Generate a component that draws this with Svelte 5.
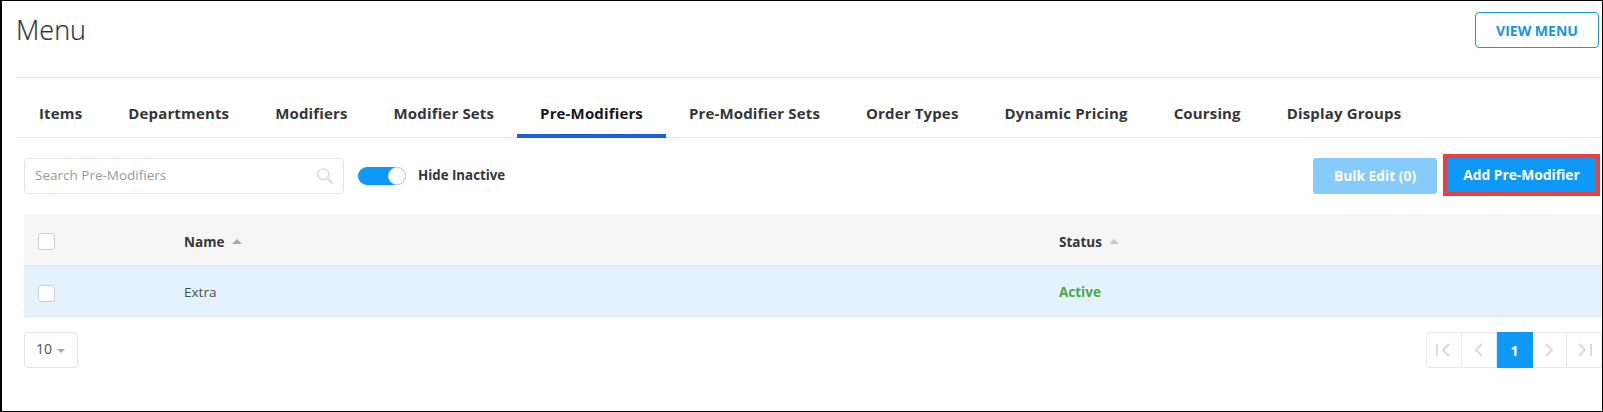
<script lang="ts">
  const tabs = [
    'Items',
    'Departments',
    'Modifiers',
    'Modifier Sets',
    'Pre-Modifiers',
    'Pre-Modifier Sets',
    'Order Types',
    'Dynamic Pricing',
    'Coursing',
    'Display Groups'
  ];
  let activeTab = $state('Pre-Modifiers');
  let hideInactive = $state(true);
</script>

<div class="page">
  <header class="top">
    <h1>Menu</h1>
    <button class="view-menu">VIEW MENU</button>
  </header>

  <nav class="tabs">
    {#each tabs as tab}
      <button class="tab" class:active={activeTab === tab} onclick={() => (activeTab = tab)}>{tab}</button>
    {/each}
  </nav>

  <div class="toolbar">
    <div class="search">
      <span>Search Pre-Modifiers</span>
      <svg width="17" height="17" viewBox="0 0 20 20" fill="none" stroke="#dcdcdc">
        <circle cx="8.5" cy="8.5" r="6.5" stroke-width="1.8" />
        <path d="M13.5 13.5 L18.5 18.5" stroke-width="2.6" stroke-linecap="round" />
      </svg>
    </div>
    <button class="toggle" class:on={hideInactive} aria-label="Hide Inactive" onclick={() => (hideInactive = !hideInactive)}>
      <span class="knob"></span>
    </button>
    <span class="toggle-label">Hide Inactive</span>
    <div class="spacer"></div>
    <button class="bulk">Bulk Edit (0)</button>
    <div class="highlight">
      <button class="add">Add Pre-Modifier</button>
    </div>
  </div>

  <div class="table">
    <div class="row head">
      <span class="check"></span>
      <span class="name">Name <i class="caret dark"></i></span>
      <span class="status">Status <i class="caret"></i></span>
    </div>
    <div class="row body">
      <span class="check"></span>
      <span class="name">Extra</span>
      <span class="status active-text">Active</span>
    </div>
  </div>

  <div class="footer">
    <div class="page-size">10 <i class="caret-down"></i></div>
    <div class="pager">
      <span class="pg">
        <svg width="18" height="14" viewBox="0 0 18 14" fill="none" stroke="#d9d9d9" stroke-width="1.8">
          <path d="M2 1 V13 M14 1 L8 7 L14 13" />
        </svg>
      </span>
      <span class="pg">
        <svg width="10" height="14" viewBox="0 0 10 14" fill="none" stroke="#d9d9d9" stroke-width="1.8">
          <path d="M8 1 L2 7 L8 13" />
        </svg>
      </span>
      <span class="pg current">1</span>
      <span class="pg plain">
        <svg width="10" height="14" viewBox="0 0 10 14" fill="none" stroke="#d9d9d9" stroke-width="1.8">
          <path d="M2 1 L8 7 L2 13" />
        </svg>
      </span>
      <span class="pg">
        <svg width="18" height="14" viewBox="0 0 18 14" fill="none" stroke="#d9d9d9" stroke-width="1.8">
          <path d="M4 1 L10 7 L4 13 M16 1 V13" />
        </svg>
      </span>
    </div>
  </div>
</div>

<style>
  :global(body) {
    margin: 0;
    background: #fff;
  }

  .page {
    box-sizing: border-box;
    width: 1603px;
    height: 412px;
    border: 1px solid #000;
    border-left-width: 2px;
    font-family: 'Open Sans', 'Noto Sans', sans-serif;
    color: #33363b;
    overflow: hidden;
  }

  button {
    font-family: inherit;
    cursor: pointer;
  }

  .top {
    display: flex;
    justify-content: space-between;
    align-items: flex-start;
    height: 77px;
    margin-left: 14px;
    padding-top: 11px;
    box-sizing: border-box;
    border-bottom: 1px solid #e4e4e4;
  }

  h1 {
    margin: 0;
    font-size: 27px;
    font-weight: 300;
    line-height: 36px;
    color: #2f3237;
    -webkit-text-stroke: 0.2px #2f3237;
  }

  .view-menu {
    width: 124px;
    height: 36px;
    margin-right: 3px;
    background: #fff;
    border: 1px solid #1b95e0;
    border-radius: 4px;
    color: #1b95e0;
    font-size: 14px;
    font-weight: 700;
    padding: 0;
  }

  .tabs {
    display: flex;
    height: 60px;
    margin-left: 14px;
    box-sizing: border-box;
    border-bottom: 1px solid #e4e4e4;
  }

  .tab {
    height: 60px;
    padding: 14px 23px 0;
    background: none;
    border: none;
    border-bottom: 4px solid transparent;
    font-size: 15px;
    letter-spacing: 0.15px;
    font-weight: 700;
    color: #33363b;
    white-space: nowrap;
  }

  .tab.active {
    color: #16181b;
    border-bottom-color: #1a5fdb;
  }

  .toolbar {
    display: flex;
    align-items: center;
    height: 44px;
    margin: 16px 0 0 22px;
  }

  .search {
    box-sizing: border-box;
    width: 320px;
    height: 36px;
    display: flex;
    align-items: center;
    justify-content: space-between;
    padding: 0 10px 2px;
    border: 1px solid #e4e4e4;
    border-radius: 4px;
    font-size: 13.5px;
    color: #9a9a9a;
  }

  .toggle {
    position: relative;
    width: 48px;
    height: 18px;
    margin-left: 14px;
    padding: 0;
    border: none;
    border-radius: 9px;
    background: #cfcfcf;
  }

  .toggle.on {
    background: #0d99f5;
  }

  .knob {
    position: absolute;
    top: 0;
    left: 0;
    box-sizing: border-box;
    width: 18px;
    height: 18px;
    border-radius: 50%;
    background: #fff;
    border: 1px solid #d8d8d8;
  }

  .toggle.on .knob {
    left: 30px;
  }

  .toggle-label {
    margin-left: 12px;
    padding-bottom: 2px;
    font-size: 13.3px;
    font-weight: 700;
  }

  .spacer {
    flex: 1;
  }

  .bulk,
  .add {
    height: 36px;
    border: none;
    border-radius: 3px;
    color: #fff;
    font-size: 13.8px;
    font-weight: 700;
    padding: 0 0 2px;
  }

  .bulk {
    width: 124px;
    margin-right: 6px;
    background: #86cbfa;
  }

  .highlight {
    align-self: flex-start;
    border: 4px solid #e8413f;
    margin-right: 2px;
    display: flex;
  }

  .add {
    width: 149px;
    height: 34px;
    border-radius: 0;
    background: #0d99f5;
  }

  .table {
    margin: 16px 0 0 22px;
  }

  .row {
    display: grid;
    grid-template-columns: 146px 875px 1fr;
    align-items: center;
    padding-left: 14px;
    font-size: 13.5px;
    box-sizing: border-box;
  }

  .head {
    height: 52px;
    padding-top: 4px;
    background: #f6f6f6;
    border-bottom: 1px solid #dfe5ea;
    font-weight: 700;
  }

  .body {
    height: 51px;
    padding-top: 1px;
    background: #e3f2fd;
    border-bottom: 1px solid #dbe5ec;
    color: #4a4f55;
  }

  .body .check {
    margin-top: 4px;
  }

  .check {
    box-sizing: border-box;
    width: 17px;
    height: 17px;
    background: #fff;
    border: 1px solid #cfcfcf;
    border-radius: 3px;
  }

  .caret {
    display: inline-block;
    margin-left: 4px;
    vertical-align: 3px;
    border-left: 5px solid transparent;
    border-right: 5px solid transparent;
    border-bottom: 5px solid #c8c8c8;
  }

  .caret.dark {
    border-bottom-color: #a8a8a8;
  }

  .active-text {
    color: #4aa843;
    font-weight: 700;
  }

  .footer {
    display: flex;
    justify-content: space-between;
    margin: 15px 0 0 22px;
  }

  .page-size {
    box-sizing: border-box;
    width: 54px;
    height: 36px;
    display: flex;
    align-items: center;
    gap: 5px;
    padding: 0 0 3px 11px;
    border: 1px solid #e4e4e4;
    border-radius: 4px;
    font-size: 14px;
    color: #4a4f55;
  }

  .caret-down {
    margin-top: 5px;
    border-left: 4px solid transparent;
    border-right: 4px solid transparent;
    border-top: 4px solid #a8a8a8;
  }

  .pager {
    display: flex;
    width: 176px;
    height: 36px;
    box-sizing: border-box;
    border: 1px solid #e8e8e8;
    border-radius: 4px 0 0 4px;
  }

  .pg {
    flex: 1;
    display: flex;
    align-items: center;
    justify-content: center;
    border-right: 1px solid #e8e8e8;
    box-sizing: border-box;
  }

  .pg:last-child {
    border-right: none;
  }

  .pg.plain {
    border-right: 1px solid #e8e8e8;
  }

  .pg.current {
    flex: 0 0 36px;
    margin: -1px 0;
    background: #0d99f5;
    color: #fff;
    font-size: 14px;
    font-weight: 700;
    border-right: none;
  }
</style>
